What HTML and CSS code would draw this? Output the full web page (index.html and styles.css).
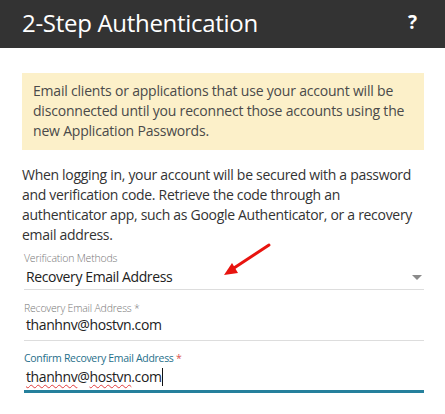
FILE: index.html
```html
<!DOCTYPE html>
<html lang="en">
<head>
    <meta charset="UTF-8">
    <meta name="viewport" content="width=device-width, initial-scale=1.0">
    <title>2-Step Authentication</title>
    <link rel="stylesheet" href="styles.css">
</head>
<body>

    <div class="dialog">
        <div class="dialog--header">
            <div class="dialog--title">2-Step Authentication</div>
            <div class="dialog--help">?</div>
        </div>

        <div class="dialog--body">
            <div class="notice">
                Email clients or applications that use your account will be disconnected until you reconnect those accounts using the new Application Passwords.
            </div>

            <p class="intro">
                When logging in, your account will be secured with a password and verification code. Retrieve the code through an authenticator app, such as Google Authenticator, or a recovery email address.
            </p>

            <div class="field field--select">
                <div class="field--label">Verification Methods</div>
                <div class="field--value">
                    <span>Recovery Email Address</span>
                    <span class="caret"></span>
                </div>
                <svg class="pointer" width="60" height="44" viewBox="0 0 60 44">
                    <line x1="47" y1="9" x2="12" y2="32" stroke="#e8140f" stroke-width="3" stroke-linecap="round"/>
                    <polygon points="2,39 10,27 16,37" fill="#e8140f"/>
                </svg>
            </div>

            <div class="field">
                <div class="field--label">Recovery Email Address *</div>
                <div class="field--value">thanhnv@hostvn.com</div>
            </div>

            <div class="field is-focused">
                <div class="field--label">Confirm Recovery Email Address <span class="req">*</span></div>
                <div class="field--value"><span class="typo">thanhnv</span>@<span class="typo">hostvn</span>.com<span class="cursor"></span></div>
            </div>
        </div>
    </div>

</body>
</html>
```
FILE: styles.css
```css
html, body {
    height: 100%;
    overflow: hidden;
}
body {
    font-family: 'Open Sans', sans-serif;
    background-color: #ffffff;
    color: #333333;
    margin: 0;
}

.dialog--header {
    height: 48px;
    background-color: #333333;
    display: flex;
    align-items: center;
    justify-content: space-between;
    padding: 0 28px 0 22px;
}
.dialog--title {
    color: #ffffff;
    font-size: 24px;
    letter-spacing: -0.3px;
    line-height: 1;
    padding-bottom: 3px;
}
.dialog--help {
    color: #ffffff;
    font-size: 19px;
    font-weight: 700;
    padding-bottom: 4px;
}

.dialog--body {
    padding: 25px 21px 0 22px;
}

.notice {
    background-color: #fcf0c9;
    color: #4a4a4a;
    font-size: 14px;
    line-height: 20px;
    letter-spacing: -0.2px;
    padding: 8px 11px 9px;
}

.intro {
    margin: 15px 0 0;
    font-size: 14px;
    line-height: 20px;
    letter-spacing: -0.3px;
    color: #333333;
}

.field {
    position: relative;
    margin-left: 2px;
    border-bottom: 1px solid #dddddd;
    padding-top: 11px;
}
.field--select {
    margin-top: 6px;
    padding-top: 0;
}
.field--label {
    font-size: 10.5px;
    font-weight: 300;
    color: #777777;
    line-height: 14px;
    letter-spacing: -0.2px;
}
.field--value {
    display: flex;
    align-items: center;
    justify-content: space-between;
    font-size: 14px;
    letter-spacing: -0.4px;
    color: #222222;
    line-height: 20px;
    padding: 0 0 5px 2px;
}
.field--select .field--value {
    padding: 2px 0 2px 2px;
}
.caret {
    width: 0;
    height: 0;
    border-left: 5px solid transparent;
    border-right: 5px solid transparent;
    border-top: 5px solid #8a8a8a;
    margin-right: 2px;
}

.pointer {
    position: absolute;
    left: 198px;
    top: -15px;
}

.is-focused {
    border-bottom: 3px solid #25809c;
    padding-top: 10px;
}
.is-focused .field--label {
    color: #1f6f8a;
    font-weight: 400;
    letter-spacing: -0.3px;
}
.is-focused .field--value {
    justify-content: flex-start;
    padding: 2px 0 3px 2px;
}
.req {
    color: #d9534f;
}
.typo {
    text-decoration: underline wavy #e03c3c;
    text-decoration-thickness: 1px;
    text-underline-offset: 2px;
}
.cursor {
    display: inline-block;
    width: 1px;
    height: 18px;
    background-color: #111111;
}
```
